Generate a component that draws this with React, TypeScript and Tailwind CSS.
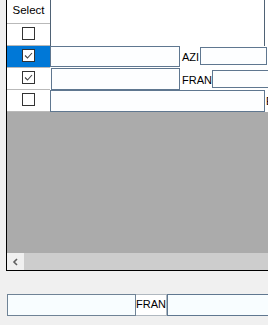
import React from "react";

function Check({ checked }: { checked?: boolean }) {
  return (
    <span className="flex h-[13px] w-[13px] items-center justify-center border border-[#333333] bg-white">
      {checked && (
        <svg width="9" height="9" viewBox="0 0 9 9">
          <path d="M1 4.5 L3.5 7 L8 2" stroke="#444" strokeWidth="1.1" fill="none" />
        </svg>
      )}
    </span>
  );
}

function SelectCell({ checked, selected }: { checked?: boolean; selected?: boolean }) {
  return (
    <div
      className={
        "flex w-[43px] shrink-0 justify-center pt-[3px] border-b border-[#b9b9b9] " +
        (selected ? "bg-[#0078d7]" : "bg-white")
      }
    >
      <Check checked={checked} />
    </div>
  );
}

const box = "border border-[#5f7790] bg-[#fdfeff] shrink-0";

export default function App() {
  return (
    <div className="h-[325px] w-[268px] overflow-hidden bg-[#f0f0f0] font-['Liberation_Sans',Arial,sans-serif] text-[11px] text-black">
      {/* grid */}
      <div className="ml-[6px] flex h-[271px] w-[270px] flex-col border-b border-l border-black">
        {/* header */}
        <div className="flex h-[24px] shrink-0 bg-white">
          <div className="flex w-[43px] shrink-0 items-center justify-center border-b border-[#b9b9b9] pb-[1px] text-[11.5px]">
            Select
          </div>
          <div className="w-[215px] border-l border-r border-[#4f6275]" />
        </div>

        {/* row 1 */}
        <div className="flex h-[22px] shrink-0 bg-white">
          <SelectCell />
          <div className="w-[215px] border-l border-r border-[#4f6275]" />
        </div>

        {/* row 2 */}
        <div className="flex h-[22px] shrink-0 bg-white">
          <SelectCell checked selected />
          <div className="flex items-start">
            <div className={box + " h-[21px] w-[130px]"} />
            <span className="ml-[2px] mt-[5px] leading-[12px]">AZI</span>
            <div className={box + " ml-[1px] mt-[1px] h-[18px] w-[67px]"} />
          </div>
        </div>

        {/* row 3 */}
        <div className="flex h-[22px] shrink-0 bg-white">
          <SelectCell checked />
          <div className="flex items-start">
            <div className={box + " ml-[1px] h-[22px] w-[129px]"} />
            <span className="ml-[2px] mt-[6px] leading-[12px]">FRAN</span>
            <div className={box + " mt-[2px] h-[18px] w-[70px]"} />
          </div>
        </div>

        {/* row 4 */}
        <div className="flex h-[22px] shrink-0 bg-white">
          <SelectCell />
          <div className="flex items-start">
            <div className={box + " h-[22px] w-[215px]"} />
            <span className="ml-[1px] mt-[5px] leading-[12px]">E</span>
          </div>
        </div>

        <div className="flex-1 bg-[#ababab]" />

        {/* horizontal scrollbar */}
        <div className="flex h-[17px] shrink-0">
          <div className="flex w-[17px] items-center justify-center bg-[#f0f0f0]">
            <svg width="7" height="8" viewBox="0 0 7 8">
              <path d="M5 1 L2 4 L5 7" stroke="#606060" strokeWidth="1.6" fill="none" />
            </svg>
          </div>
          <div className="flex-1 bg-[#cdcdcd]" />
        </div>
      </div>

      {/* bottom editor */}
      <div className="ml-[7px] mt-[23px] flex h-[22px]">
        <div className="h-[22px] w-[129px] shrink-0 border border-[#6f8396] bg-[#f8fdff]" />
        <div className="flex h-[22px] w-[31px] shrink-0 items-center border-y border-r border-[#b0b8c0] bg-white pb-[1px]">
          FRAN
        </div>
        <div className="h-[22px] w-[120px] shrink-0 border border-[#5f7790] bg-[#f8fdff]" />
      </div>
    </div>
  );
}
